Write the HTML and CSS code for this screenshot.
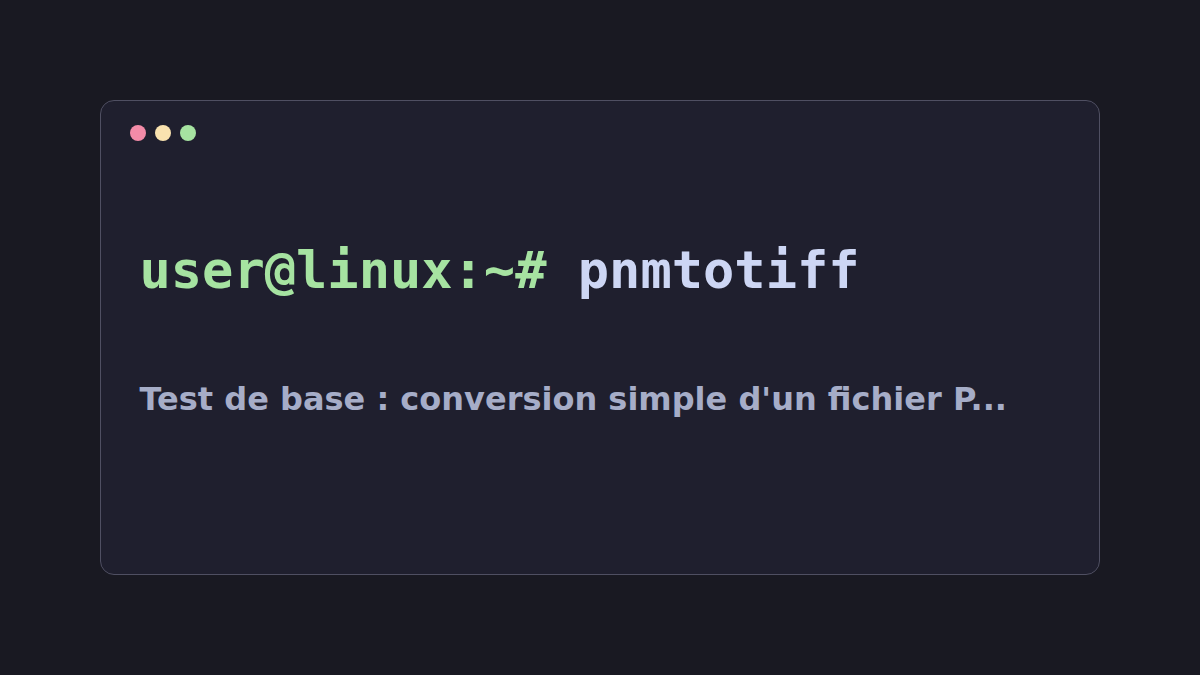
FILE: index.html
```html
<!DOCTYPE html>
<html lang="fr">
<head>
<meta charset="utf-8">
<title>pnmtotiff</title>
<link rel="stylesheet" href="styles.css">
</head>
<body>
<div class="card">
  <div class="dots">
    <span class="dot dot-red"></span>
    <span class="dot dot-yellow"></span>
    <span class="dot dot-green"></span>
  </div>
  <div class="content">
    <h1 class="cmd"><span class="prompt">user@linux:~#</span> <span class="name">pnmtotiff</span></h1>
    <p class="desc">Test de base : conversion simple d'un fichier P...</p>
  </div>
</div>
</body>
</html>
```
FILE: styles.css
```css
html, body {
  margin: 0;
  padding: 0;
}
body {
  width: 1200px;
  height: 675px;
  background: #191922;
  display: flex;
  align-items: center;
  justify-content: center;
  font-family: "DejaVu Sans", sans-serif;
}
.card {
  box-sizing: border-box;
  width: 1000px;
  height: 475px;
  background: #1f1f2e;
  border: 1.5px solid #4f4f62;
  border-radius: 14px;
  display: flex;
  flex-direction: column;
}
.dots {
  display: flex;
  gap: 9px;
  padding: 23.5px 0 0 28.5px;
}
.dot {
  width: 16px;
  height: 16px;
  border-radius: 50%;
}
.dot-red { background: #f38ba8; }
.dot-yellow { background: #f9e2af; }
.dot-green { background: #a6e3a1; }
.content {
  padding: 0 38.5px;
}
.cmd {
  margin: 99px 0 0;
  font-family: "DejaVu Sans Mono", monospace;
  font-weight: bold;
  font-size: 52px;
  line-height: 60px;
  white-space: nowrap;
}
.prompt { color: #a6e3a1; }
.name { color: #cdd6f4; }
.desc {
  margin: 81px 0 0;
  font-weight: bold;
  font-size: 32px;
  line-height: 36px;
  color: #a6adc8;
  white-space: nowrap;
}
```
